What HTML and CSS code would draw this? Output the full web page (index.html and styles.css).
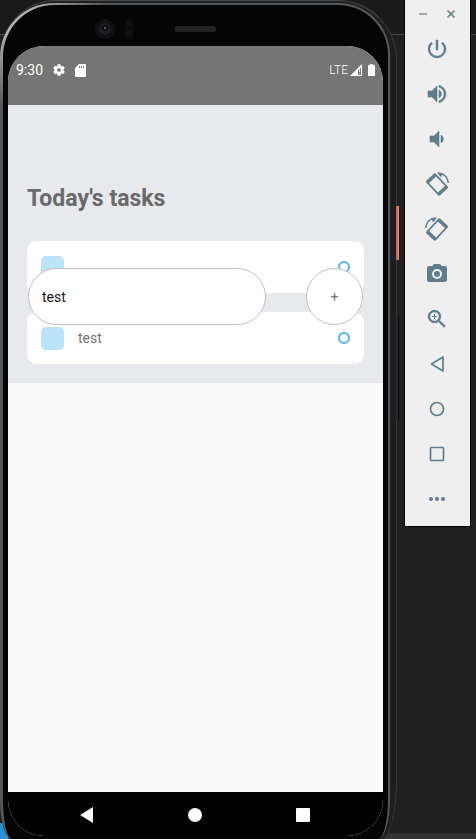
FILE: index.html
```html
<!DOCTYPE html>
<html lang="en">
<head>
<meta charset="utf-8">
<meta name="viewport" content="width=device-width, initial-scale=1">
<title>Today's tasks</title>
<link rel="stylesheet" href="styles.css">
</head>
<body>
<div class="desktop">
  <div class="phone">
    <span class="side-key power-key"></span>
    <span class="side-key volume-key"></span>
    <div class="bezel">
      <div class="sensors">
        <svg class="sensor-art" width="140" height="20" viewBox="0 0 140 20" aria-hidden="true">
          <circle cx="20" cy="10" r="10" fill="#111114"/>
          <circle cx="20" cy="10" r="6" fill="#1d1d23"/>
          <circle cx="20" cy="9" r="3" fill="#09090f"/>
          <circle cx="20" cy="9" r="1" fill="#77778e"/>
          <rect x="40" y="0" width="9" height="20" rx="4" fill="#0b0b0d"/>
          <circle cx="44" cy="5" r="3" fill="#101013"/>
          <circle cx="44" cy="14" r="3" fill="#101013"/>
          <rect x="90" y="7" width="41" height="6" rx="2" fill="#232324"/>
        </svg>
      </div>
      <div class="screen">
        <header class="status-bar">
          <span class="clock">9:30</span>
          <svg width="14" height="14" viewBox="0 0 24 24" fill="#fff" aria-hidden="true"><path d="M19.14 12.94c.04-.3.06-.61.06-.94 0-.32-.02-.64-.07-.94l2.03-1.58a.49.49 0 0 0 .12-.61l-1.92-3.32a.49.49 0 0 0-.59-.22l-2.39.96a7 7 0 0 0-1.62-.94l-.36-2.54a.48.48 0 0 0-.48-.41h-3.84a.48.48 0 0 0-.47.41l-.36 2.54c-.59.24-1.13.57-1.62.94l-2.39-.96a.48.48 0 0 0-.59.22L2.74 8.87a.48.48 0 0 0 .12.61l2.03 1.58a6 6 0 0 0 0 1.88l-2.03 1.58a.49.49 0 0 0-.12.61l1.92 3.32c.12.22.37.29.59.22l2.39-.96c.5.38 1.03.7 1.62.94l.36 2.54c.05.24.24.41.48.41h3.84c.24 0 .44-.17.47-.41l.36-2.54c.59-.24 1.13-.56 1.62-.94l2.39.96c.22.08.47 0 .59-.22l1.92-3.32a.48.48 0 0 0-.12-.61zM12 15.6a3.6 3.6 0 1 1 0-7.2 3.6 3.6 0 0 1 0 7.2z" stroke="#fff" stroke-width=".8"/></svg>
          <svg class="sd" width="11" height="13" viewBox="0 0 11 13" fill="#fff" aria-hidden="true"><path fill-rule="evenodd" d="M4 0h6a1 1 0 0 1 1 1v11a1 1 0 0 1-1 1H1a1 1 0 0 1-1-1V4zm0 2v2h1V2zm2 0v2h1V2zm2 0v2h1V2z"/></svg>
          <span class="network">LTE</span>
          <svg width="12" height="12" viewBox="0 0 12 12" aria-hidden="true"><path d="M0 12 12 0v12z" fill="#fff"/><path d="M8 6.500 11 3.500V11H8z" fill="#757575"/><path d="M9.500 5v3M9.500 9v1" stroke="#fff" stroke-width=".8"/></svg>
          <svg class="battery" width="7" height="12" viewBox="0 0 7 12" fill="#fff" aria-hidden="true"><path d="M2 0h3v1h1.500l.5.500v10l-.5.500h-6l-.5-.5v-10L.5 1H2z"/></svg>
        </header>
        <main class="app">
          <section class="tasks">
            <h1>Today's tasks</h1>
            <ul class="task-list">
              <li class="task"><span class="square"></span><span class="task-text"></span><span class="ring"></span></li>
              <li class="task"><span class="square"></span><span class="task-text">test</span><span class="ring"></span></li>
            </ul>
            <form class="composer" onsubmit="return false">
              <input class="task-input" type="text" value="test" aria-label="Write a task">
              <button class="add" type="submit" aria-label="Add task">+</button>
            </form>
          </section>
        </main>
        <nav class="nav-bar" aria-label="System navigation">
          <button type="button" aria-label="Back"><svg width="16" height="16" viewBox="0 0 16 16"><path d="M14 0v16L1 8z" fill="#fff"/></svg></button>
          <button type="button" aria-label="Home"><svg width="16" height="16" viewBox="0 0 16 16"><circle cx="8" cy="8" r="7" fill="#fff"/></svg></button>
          <button type="button" aria-label="Overview"><svg width="16" height="16" viewBox="0 0 16 16"><rect x="1" y="1" width="14" height="14" rx="1" fill="#fff"/></svg></button>
        </nav>
      </div>
    </div>
  </div>
  <aside class="toolbar" aria-label="Emulator controls">
    <div class="window-controls">
      <button type="button" aria-label="Minimize"><svg width="8" height="8" viewBox="0 0 8 8"><path d="M0 4h8" stroke="#81939b" stroke-width="1.500"/></svg></button>
      <button type="button" aria-label="Close"><svg width="8" height="8" viewBox="0 0 8 8"><path d="m.5.500 7 7m0-7-7 7" stroke="#6f858f" stroke-width="1.600"/></svg></button>
    </div>
    <button class="tool" type="button" aria-label="Power"><svg viewBox="0 0 24 24"><path d="M13 3h-2v10h2zm4.830 2.170-1.420 1.420A6.920 6.920 0 0 1 19 12a7 7 0 1 1-11.420-5.420L6.170 5.170A8.930 8.930 0 0 0 3 12a9 9 0 1 0 18 0c0-2.740-1.230-5.180-3.170-6.830z" stroke="#607d8b" stroke-width=".4"/></svg></button>
    <button class="tool" type="button" aria-label="Volume up"><svg viewBox="0 0 24 24"><path d="M3 9v6h4l5 5V4L7 9zm13.500 3A4.500 4.500 0 0 0 14 7.970v8.050A4.470 4.470 0 0 0 16.500 12zM14 3.230v2.060a7 7 0 0 1 0 13.420v2.060a9 9 0 0 0 0-17.540z" stroke="#607d8b" stroke-width=".6"/></svg></button>
    <button class="tool" type="button" aria-label="Volume down"><svg viewBox="0 0 24 24"><path d="M18.500 12A4.500 4.500 0 0 0 16 7.970v8.050A4.500 4.500 0 0 0 18.500 12zM5 9v6h4l5 5V4L9 9z" stroke="#607d8b" stroke-width=".6"/></svg></button>
    <button class="tool" type="button" aria-label="Rotate left"><svg viewBox="0 0 24 24"><g transform="translate(12 12.500) rotate(-43)"><path fill-rule="evenodd" d="M-5-10H5a1.500 1.500 0 0 1 1.500 1.500V8.500A1.500 1.500 0 0 1 5 10H-5A1.500 1.500 0 0 1-6.500 8.500V-8.500A1.500 1.500 0 0 1-5-10zM-4.800-6.500V6.500H4.800V-6.500z"/></g><path d="M13 1.300C18.500.8 23 5 23.300 11" fill="none" stroke="#607d8b" stroke-width="1.500"/><path d="m12 .5 6 .8-2 4z"/></svg></button>
    <button class="tool" type="button" aria-label="Rotate right"><svg viewBox="0 0 24 24"><g transform="matrix(-1 0 0 1 24 0)"><g transform="translate(12 12.500) rotate(-43)"><path fill-rule="evenodd" d="M-5-10H5a1.500 1.500 0 0 1 1.500 1.500V8.500A1.500 1.500 0 0 1 5 10H-5A1.500 1.500 0 0 1-6.500 8.500V-8.500A1.500 1.500 0 0 1-5-10zM-4.800-6.500V6.500H4.800V-6.500z"/></g><path d="M13 1.300C18.500.8 23 5 23.300 11" fill="none" stroke="#607d8b" stroke-width="1.500"/><path d="m12 .5 6 .8-2 4z"/></g></svg></button>
    <button class="tool" type="button" aria-label="Take screenshot"><svg viewBox="0 0 24 24"><path fill-rule="evenodd" d="M9 2 7.170 4H4a2 2 0 0 0-2 2v12c0 1.100.9 2 2 2h16a2 2 0 0 0 2-2V6a2 2 0 0 0-2-2h-3.170L15 2zm3 15a5 5 0 1 1 0-10 5 5 0 0 1 0 10z"/><circle cx="12" cy="12" r="3"/></svg></button>
    <button class="tool" type="button" aria-label="Zoom"><svg viewBox="0 0 24 24"><path d="M15.500 14h-.79l-.28-.27a6.500 6.500 0 1 0-.7.700l.27.280v.79l5 4.990L20.490 19zm-6 0a4.500 4.500 0 1 1 0-9 4.500 4.500 0 0 1 0 9z" stroke="#607d8b" stroke-width=".3"/><path d="M9 7h1v2h2v1h-2v2H9v-2H7V9h2z"/></svg></button>
    <button class="tool" type="button" aria-label="Back"><svg viewBox="0 0 24 24"><path d="M18 5v14L6.500 12z" fill="none" stroke="#607d8b" stroke-width="1.700" stroke-linejoin="round"/></svg></button>
    <button class="tool" type="button" aria-label="Home"><svg viewBox="0 0 24 24"><circle cx="12" cy="12" r="6.500" fill="none" stroke="#607d8b" stroke-width="1.700"/></svg></button>
    <button class="tool" type="button" aria-label="Overview"><svg viewBox="0 0 24 24"><rect x="5.500" y="5.500" width="13" height="13" rx=".8" fill="none" stroke="#607d8b" stroke-width="1.700"/></svg></button>
    <button class="tool" type="button" aria-label="More"><svg viewBox="0 0 24 24"><circle cx="6" cy="12" r="2"/><circle cx="12" cy="12" r="2"/><circle cx="18" cy="12" r="2"/></svg></button>
  </aside>
</div>
</body>
</html>
```
FILE: styles.css
```css
* {
  box-sizing: border-box;
}

body {
  margin: 0;
  background: #202020;
  font-family: Roboto, "Liberation Sans", sans-serif;
}

button {
  padding: 0;
  border: 0;
  background: none;
  font: inherit;
}

svg {
  display: block;
}

.desktop {
  display: flex;
  align-items: flex-start;
  gap: 7px;
  min-height: 100vh;
  padding-right: 5px;
  background:
    linear-gradient(#2a8fd6, #2a8fd6) left bottom / 8px 16px no-repeat,
    linear-gradient(#333, #333) bottom / 100% 6px no-repeat,
    linear-gradient(#1a1a1a 34px, #4a4a4a 34px, #4a4a4a 35px, #202020 35px);
}

/* Device frame */
.phone {
  position: relative;
  display: flex;
  flex: 1;
  align-self: stretch;
  padding: 2px 6px 0 0;
  border-top: 1px solid #4a4b4c;
  border-right: 1px solid #3a3b3c;
  border-radius: 56px 60px 16px 12px / 56px 60px 60px 40px;
  background: #1d1e1f;
}

.side-key {
  position: absolute;
  right: -3px;
  width: 3px;
}

.power-key {
  top: 205px;
  height: 54px;
  background: linear-gradient(90deg, #b96150, #ec866f);
}

.volume-key {
  top: 314px;
  height: 105px;
  border-right: 1px solid #08090a;
  background: #2b2c2d;
}

.bezel {
  display: flex;
  flex: 1;
  flex-direction: column;
  padding: 0 5px 3px;
  border: 2px solid transparent;
  border-bottom: 0;
  border-left-width: 3px;
  border-radius: 54px 52px 12px 12px / 54px 52px 40px 40px;
  background:
    linear-gradient(#050506, #050506) padding-box,
    radial-gradient(circle at 14px 14px, #b0b0b0 20px, #55585a 90px) border-box;
}

.sensors {
  display: flex;
  justify-content: center;
  height: 41px;
  padding-top: 14px;
}

.sensor-art {
  margin-right: 82px;
}

.screen {
  display: flex;
  flex: 1;
  flex-direction: column;
  overflow: hidden;
  border-radius: 36px;
  background: #fafafa;
}

.status-bar {
  display: flex;
  align-items: center;
  height: 59px;
  padding: 0 8px 11px;
  background: #757575;
  color: #fff;
  font-size: 14px;
  line-height: 16px;
}

.clock {
  margin-right: 9px;
}

.sd {
  margin-left: 9px;
}

.network {
  margin: 0 2px 0 auto;
  font-size: 12px;
  font-weight: 300;
}

.battery {
  margin-left: 6px;
}

/* Task list */
.app {
  flex: 1;
}

.tasks {
  position: relative;
  padding: 78px 19px 19px;
  background: #e8e9ed;
}

h1 {
  margin: 0 0 26px;
  color: #696a6c;
  font-size: 23px;
  font-weight: 700;
  line-height: 32px;
}

.task-list {
  display: grid;
  gap: 19px;
  margin: 0;
  padding: 0;
  list-style: none;
}

.task {
  display: flex;
  align-items: center;
  gap: 14px;
  height: 52px;
  padding: 0 14px;
  border-radius: 10px;
  background: #fff;
}

.square {
  width: 23px;
  height: 23px;
  border-radius: 5px;
  background: #bbe3fa;
}

.task-text {
  flex: 1;
  color: #757575;
  font-size: 14px;
}

.ring {
  width: 12px;
  height: 12px;
  border: 2px solid #55b6ec;
  border-radius: 50%;
}

.composer {
  position: absolute;
  right: 20px;
  bottom: 58px;
  left: 20px;
  display: flex;
  gap: 40px;
}

.task-input,
.add {
  height: 57px;
  border: 1px solid #c0c0c0;
  border-radius: 57px;
  background: #fff;
}

.task-input {
  flex: 1;
  min-width: 0;
  padding: 0 13px;
  color: #151515;
  font: 14px Roboto, "Liberation Sans", sans-serif;
}

.add {
  width: 57px;
  color: #757575;
  font-size: 14px;
}

.nav-bar {
  display: flex;
  justify-content: center;
  gap: 92px;
  height: 44px;
  padding: 2px 1px 0 0;
  background: #000;
}

/* Emulator toolbar */
.toolbar {
  flex: 0 0 67px;
  padding: 0 1px 5px 0;
  border: 1px solid #000;
  border-top: 0;
  background: #efefef;
}

.window-controls {
  display: flex;
  justify-content: center;
  gap: 20px;
  height: 26px;
  padding-top: 2px;
}

.tool {
  display: grid;
  place-items: center;
  width: 100%;
  height: 45px;
}

.tool svg {
  width: 24px;
  height: 24px;
  fill: #607d8b;
}
```
